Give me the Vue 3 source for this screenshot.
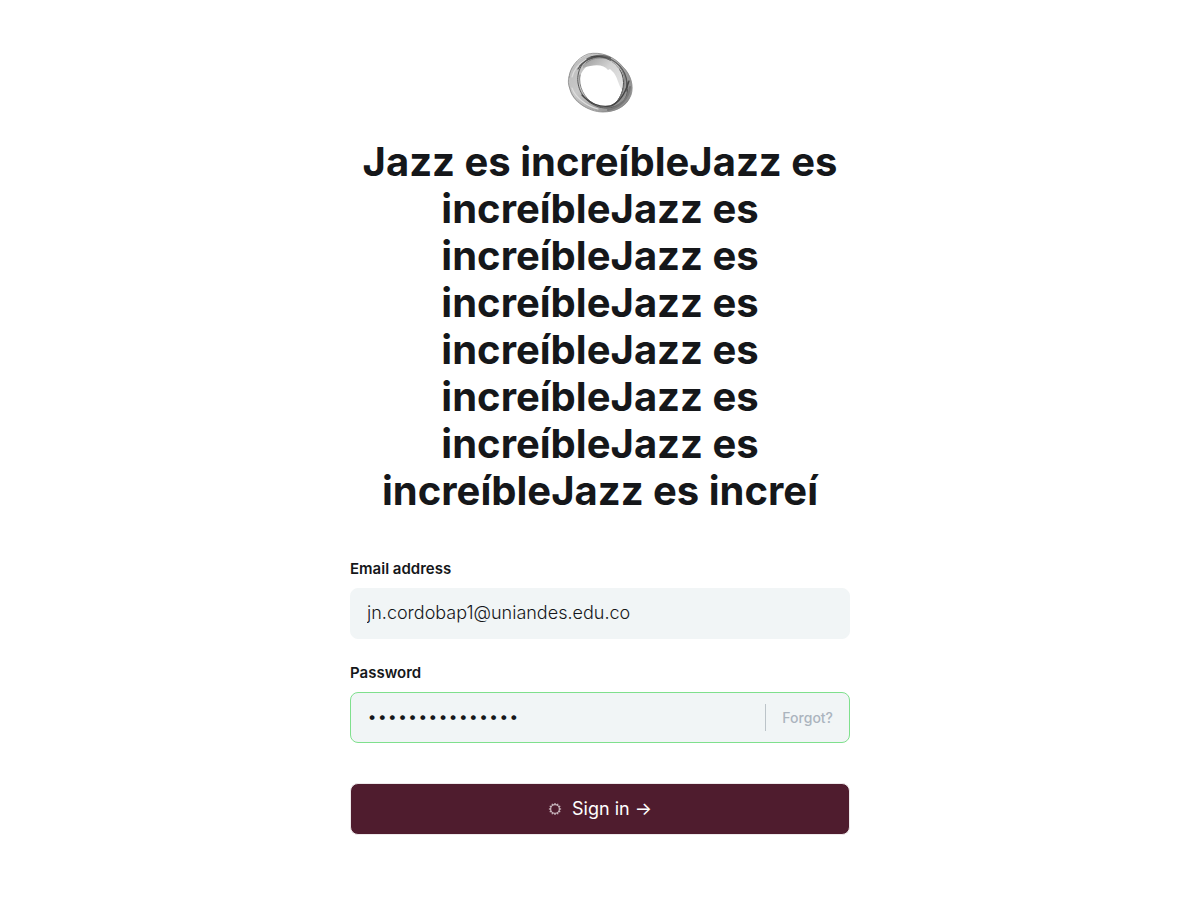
<script setup>
import { ref } from 'vue'

const title = 'Jazz es increíble'.repeat(8) + 'Jazz es increí'
const email = ref('jn.cordobap1@uniandes.edu.co')
const password = ref('jazzesincreible')
const ticks = Array.from({ length: 12 }, (_, i) => i * 30)
</script>

<template>
  <main class="page">
    <form class="signin" @submit.prevent>
      <header class="head">
        <svg class="logo" viewBox="0 0 80 75" aria-hidden="true">
          <defs>
            <linearGradient id="band" x1="0" y1="0.2" x2="1" y2="0.8">
              <stop offset="0" stop-color="#bdbdbd" />
              <stop offset="0.3" stop-color="#c8c8c8" />
              <stop offset="0.7" stop-color="#a0a0a0" />
              <stop offset="1" stop-color="#8a8a8a" />
            </linearGradient>
            <linearGradient id="veil" x1="0" y1="0" x2="1" y2="0.8">
              <stop offset="0" stop-color="#999" />
              <stop offset="0.5" stop-color="#d2d2d2" />
              <stop offset="1" stop-color="#e4e4e4" />
            </linearGradient>
          </defs>
          <path fill="url(#band)" fill-rule="evenodd" d="M9 32C9 24 16 15 27 10C41 5 55 12 63 22C71 29 74 41 71 50C68 60 58 67 45 67C31 67 14 59 10 46C8 41 8 36 9 32ZM20 32C18 42 23 52 33 58C44 65 57 61 61 50C65 39 60 26 50 18C37 12 23 20 20 32Z" />
          <path fill="url(#veil)" d="M23 20C32 10 50 12 58 20C65 28 66 37 62 45C58 39 58 34 54 28L50 24L48 25C44 19 34 19 23 23Z" />
          <g fill="none" stroke-linecap="round">
            <path stroke="#888" stroke-width="0.8" d="M9 32C10 23 17 13 28 9C41 6 55 12 63 22C71 30 74 41 71 50C67 61 55 67 43 67C28 67 13 56 10 44C8 39 8 35 9 32Z" />
            <path stroke="#666" stroke-width="2.4" d="M20 20C28 11 40 9 50 13" />
            <path stroke="#555" stroke-width="1.3" d="M18 24C25 12 40 9 52 15C64 22 69 34 66 46" />
            <path stroke="#444" stroke-width="1" d="M31 12C44 9 57 17 62 29C66 40 62 54 52 61" />
            <path stroke="#777" stroke-width="0.8" d="M26 18C35 10 50 12 58 20C64 26 66 36 63 44C61 52 57 58 50 62" />
            <path stroke="#555" stroke-width="1" d="M22 20C15 30 17 44 25 53C34 63 48 66 59 60C67 55 69 46 67 37" />
            <path stroke="#666" stroke-width="0.8" d="M20 30C18 41 24 53 34 59C43 64 54 64 62 57" />
            <path stroke="#444" stroke-width="1.3" d="M22 50C29 58 40 63 50 61C60 58 66 46 69 36" />
            <path stroke="#777" stroke-width="2" d="M48 65C60 63 69 53 70 42" />
            <path stroke="#ddd" stroke-width="1.2" d="M12 43C15 52 26 61 38 64M12 32C14 24 20 18 26 14" />
            <path stroke="#e0e0e0" stroke-width="0.8" d="M51 16C55 18 57 20 59 24" />
          </g>
        </svg>
        <h1>{{ title }}</h1>
      </header>

      <div class="group">
        <label for="identification">Email address</label>
        <div class="field">
          <input id="identification" v-model="email" type="email" autocomplete="username" />
        </div>
      </div>

      <div class="group">
        <label for="password">Password</label>
        <div class="field success">
          <input id="password" v-model="password" type="password" autocomplete="current-password" />
          <button class="forgot" type="button">Forgot?</button>
        </div>
      </div>

      <button class="submit" type="submit">
        <svg class="spinner" viewBox="0 0 14 14" aria-hidden="true">
          <circle cx="7" cy="7" r="4.4" />
          <path v-for="a in ticks" :key="a" d="M7 0.9V2.8" :transform="`rotate(${a} 7 7)`" />
        </svg>
        <span>Sign in →</span>
      </button>
    </form>
  </main>
</template>

<style>
body {
  margin: 0;
  background: #fff;
}
</style>

<style scoped>
.page {
  display: flex;
  justify-content: center;
  min-height: 100vh;
  box-sizing: border-box;
  padding: 45px 20px 40px;
  font-family: Inter, "Liberation Sans", sans-serif;
  color: #15171a;
}
.signin {
  display: flex;
  flex-direction: column;
  width: 100%;
  max-width: 500px;
}
.head {
  display: flex;
  flex-direction: column;
  align-items: center;
  margin-bottom: 45px;
}
.logo {
  display: block;
  width: 80px;
  height: 75px;
  margin-bottom: 18px;
}
h1 {
  margin: 0;
  font-size: 40px;
  line-height: 47px;
  font-weight: 700;
  text-align: center;
}
.group {
  margin-bottom: 24px;
}
label {
  display: block;
  margin-bottom: 9px;
  font-size: 15px;
  line-height: 20px;
  font-weight: 600;
}
.field {
  display: flex;
  align-items: center;
  height: 51px;
  box-sizing: border-box;
  border: 1px solid #f1f5f6;
  border-radius: 8px;
  background: #f1f5f6;
}
.field.success {
  border-color: #7fe08d;
}
input {
  flex: 1;
  min-width: 0;
  height: 100%;
  box-sizing: border-box;
  padding: 0 16px 2px;
  border: 0;
  outline: 0;
  background: transparent;
  font: 300 18px/24px Inter, "Liberation Sans", sans-serif;
  color: #15171a;
}
.forgot {
  height: 27px;
  padding: 0 16px;
  border: 0;
  border-left: 1px solid #bcc4c9;
  background: transparent;
  font: 500 14px/20px Inter, "Liberation Sans", sans-serif;
  color: #abb4be;
}
.submit {
  display: flex;
  align-items: center;
  justify-content: center;
  gap: 10px;
  height: 52px;
  margin-top: 16px;
  border: 1px solid #eee9eb;
  border-radius: 8px;
  background: #4f1c2e;
  font: 400 18px/24px Inter, "Liberation Sans", sans-serif;
  color: #fff;
}
.spinner {
  width: 14px;
  height: 14px;
  fill: none;
  stroke: #c5b3ba;
  stroke-width: 1.3;
}
</style>
